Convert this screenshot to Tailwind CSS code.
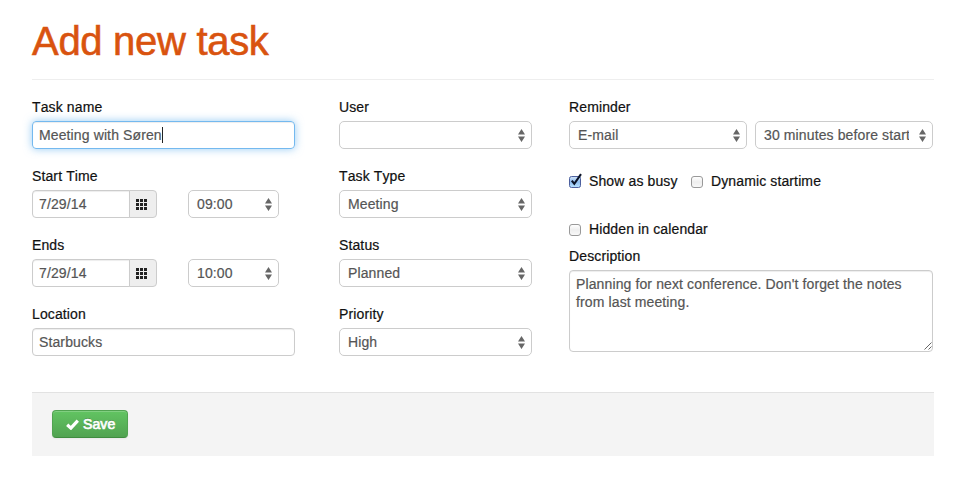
<!DOCTYPE html>
<html lang="en">
<head>
<meta charset="utf-8">
<title>Add new task</title>
<script src="https://cdn.jsdelivr.net/npm/@tailwindcss/browser@4"></script>
</head>
<body class="bg-white font-['Liberation_Sans',Arial,sans-serif] text-sm leading-5 tracking-[0.12px] text-[#111] [font-kerning:none] [-webkit-text-stroke:0.2px_currentColor]">
<svg class="hidden">
  <symbol id="arrows" viewBox="0 0 7 13"><path d="M3.5 0 7 5.6H0zM3.5 13 7 7.4H0z" fill="#666"/></symbol>
  <symbol id="grid" viewBox="0 0 11 11"><path d="M0 0h3v3H0zM4 0h3v3H4zM8 0h3v3H8zM0 4h3v3H0zM4 4h3v3H4zM8 4h3v3H8zM0 8h3v3H0zM4 8h3v3H4zM8 8h3v3H8z" fill="#222"/></symbol>
</svg>
<main class="ml-8 w-[902px] pt-[21px]">
  <h1 class="h-[58px] text-[40px] leading-10 tracking-[-0.3px] text-[#d9530f] [-webkit-text-stroke:0.6px_#d9530f]">Add new task</h1>
  <form class="border-t border-[#eee] pt-[17px]">
    <div class="flex h-[295px] items-start">
      <section class="mr-11 flex w-[263px] flex-col gap-[17px]">
        <div>
          <label class="mb-1 block">Task name</label>
          <div class="flex h-7 items-center rounded border border-[#74b9ef] px-1.5 text-[#555] shadow-[inset_0_1px_1px_rgba(0,0,0,0.075),0_0_8px_rgba(82,168,236,0.6)]">Meeting with Søren<span class="h-4 w-px bg-[#222]"></span></div>
        </div>
        <div>
          <label class="mb-1 block">Start Time</label>
          <div class="flex">
            <div class="flex h-7 w-[98px] items-center rounded-l border border-[#ccc] px-1.5 text-[#555] shadow-[inset_0_1px_1px_rgba(0,0,0,0.075)]">7/29/14</div>
            <div class="-ml-px mr-[31px] flex h-7 w-7 items-center rounded-r border border-[#ccc] bg-[#eee] pl-1.5"><svg class="size-[11px]"><use href="#grid"/></svg></div>
            <div class="flex h-7 w-[91px] items-center justify-between rounded-[5px] border border-[#ccc] pl-2 pr-1.5 text-[#555]">09:00<svg class="h-[13px] w-[7px]"><use href="#arrows"/></svg></div>
          </div>
        </div>
        <div>
          <label class="mb-1 block">Ends</label>
          <div class="flex">
            <div class="flex h-7 w-[98px] items-center rounded-l border border-[#ccc] px-1.5 text-[#555] shadow-[inset_0_1px_1px_rgba(0,0,0,0.075)]">7/29/14</div>
            <div class="-ml-px mr-[31px] flex h-7 w-7 items-center rounded-r border border-[#ccc] bg-[#eee] pl-1.5"><svg class="size-[11px]"><use href="#grid"/></svg></div>
            <div class="flex h-7 w-[91px] items-center justify-between rounded-[5px] border border-[#ccc] pl-2 pr-1.5 text-[#555]">10:00<svg class="h-[13px] w-[7px]"><use href="#arrows"/></svg></div>
          </div>
        </div>
        <div>
          <label class="mb-1 block">Location</label>
          <div class="flex h-7 items-center rounded border border-[#ccc] px-1.5 text-[#555] shadow-[inset_0_1px_1px_rgba(0,0,0,0.075)]">Starbucks</div>
        </div>
      </section>
      <section class="mr-[37px] flex w-[193px] flex-col gap-[17px]">
        <div>
          <label class="mb-1 block">User</label>
          <div class="flex h-7 items-center justify-end rounded-[5px] border border-[#ccc] pl-2 pr-1.5 text-[#555]"><svg class="h-[13px] w-[7px]"><use href="#arrows"/></svg></div>
        </div>
        <div>
          <label class="mb-1 block">Task Type</label>
          <div class="flex h-7 items-center justify-between rounded-[5px] border border-[#ccc] pl-2 pr-1.5 text-[#555]">Meeting<svg class="h-[13px] w-[7px]"><use href="#arrows"/></svg></div>
        </div>
        <div>
          <label class="mb-1 block">Status</label>
          <div class="flex h-7 items-center justify-between rounded-[5px] border border-[#ccc] pl-2 pr-1.5 text-[#555]">Planned<svg class="h-[13px] w-[7px]"><use href="#arrows"/></svg></div>
        </div>
        <div>
          <label class="mb-1 block">Priority</label>
          <div class="flex h-7 items-center justify-between rounded-[5px] border border-[#ccc] pl-2 pr-1.5 text-[#555]">High<svg class="h-[13px] w-[7px]"><use href="#arrows"/></svg></div>
        </div>
      </section>
      <section class="w-[364px]">
        <label class="mb-1 block">Reminder</label>
        <div class="flex gap-2">
          <div class="flex h-7 w-[178px] items-center justify-between rounded-[5px] border border-[#ccc] pl-2 pr-1.5 text-[#555]">E-mail<svg class="h-[13px] w-[7px]"><use href="#arrows"/></svg></div>
          <div class="flex h-7 w-[178px] items-center justify-between rounded-[5px] border border-[#ccc] pl-2 pr-1.5 text-[#555]"><span class="w-[145px] overflow-hidden whitespace-nowrap">30 minutes before start</span><svg class="h-[13px] w-[7px]"><use href="#arrows"/></svg></div>
        </div>
        <div class="mt-[22px] flex h-5">
          <svg class="mr-2 mt-0.5 h-[15px] w-3 overflow-visible" viewBox="0 0 12 15"><defs><linearGradient id="blue" x2="0" y2="1"><stop stop-color="#d5e7f9"/><stop offset=".5" stop-color="#8fbdf0"/><stop offset="1" stop-color="#b9e4ff"/></linearGradient></defs><rect x=".5" y="3.5" width="11" height="11" rx="2" fill="url(#blue)" stroke="#4c5f9e"/><path d="M2.8 7.6 5.3 10.8 12 1.2" fill="none" stroke="#0b1428" stroke-width="2.1"/></svg>
          <span class="w-[102px]">Show as busy</span>
          <span class="mr-2 mt-[5px] size-3 rounded-[3px] border border-[#999] bg-linear-to-b from-white via-[#eee] to-[#f8f8f8]"></span>
          <span>Dynamic startime</span>
        </div>
        <div class="mt-7 flex h-5">
          <span class="mr-2 mt-[5px] size-3 rounded-[3px] border border-[#999] bg-linear-to-b from-white via-[#eee] to-[#f8f8f8]"></span>
          <span>Hidden in calendar</span>
        </div>
        <label class="mb-1 mt-[7px] block">Description</label>
        <div class="relative h-[82px] rounded border border-[#ccc] px-1.5 pt-1 leading-[18px] text-[#555] shadow-[inset_0_1px_1px_rgba(0,0,0,0.075)]">Planning for next conference. Don't forget the notes<br>from last meeting.<svg class="absolute bottom-px right-0 size-[8px]" viewBox="0 0 8 8"><path d="M.5 7.5 7.5.5M4.5 7.5 7.5 4.5" stroke="#555" stroke-width=".9"/></svg></div>
      </section>
    </div>
    <div class="h-16 border-t border-[#e2e2e2] bg-[#f4f4f4] pl-5 pt-[17px]">
      <div class="flex h-7 w-[76px] items-center rounded border border-[#51a351] border-b-[#3f8c3f] bg-linear-to-b from-[#62c462] to-[#51a351] pl-[13px] text-white [text-shadow:0_-1px_0_rgba(0,0,0,0.25)] shadow-[inset_0_1px_0_rgba(255,255,255,0.2),0_1px_2px_rgba(0,0,0,0.05)]"><svg class="mr-1 h-[11px] w-[13px]" viewBox="0 0 13 11"><path d="M1.2 5.7 4.9 9.1 11.8 1.6" fill="none" stroke="#fff" stroke-width="3.2"/></svg><span class="[-webkit-text-stroke:0.7px_white]">Save</span></div>
    </div>
  </form>
</main>
</body>
</html>
